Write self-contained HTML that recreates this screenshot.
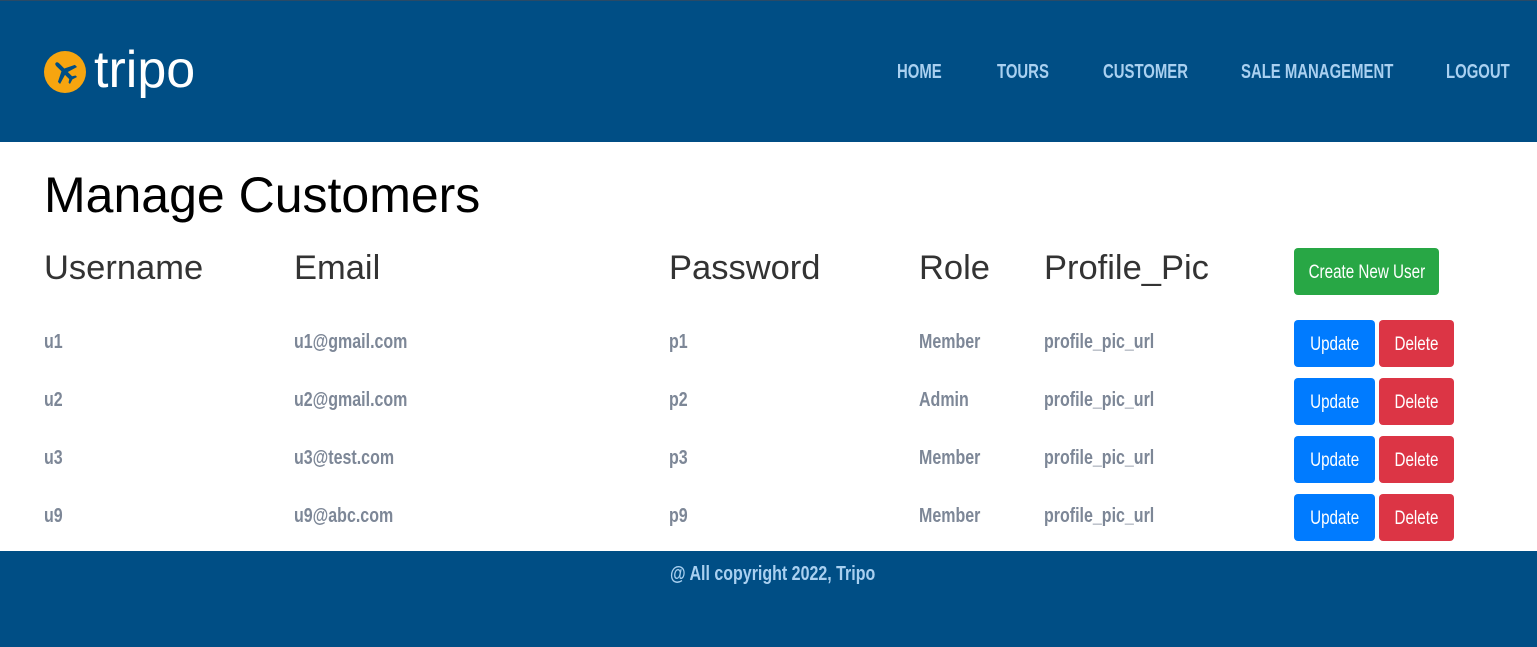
<!DOCTYPE html>
<html><head><meta charset="utf-8"><style>
*{margin:0;padding:0;box-sizing:border-box}
body{width:1537px;height:647px;position:relative;background:#fff;font-family:"Liberation Sans",sans-serif;overflow:hidden}
.hdr{position:absolute;left:0;top:0;width:1537px;height:142px;background:#004e85;border-top:1px solid #2a4a66}
.ftr{position:absolute;left:0;top:551px;width:1537px;height:96px;background:#004e85}
.c{position:absolute;white-space:nowrap;transform:scaleX(.8);transform-origin:left center;font-weight:bold}
.nav{color:#a9d0f0;font-size:20px;top:61px;transform:scaleX(.745)}
.h{position:absolute;font-size:34.5px;color:#333;top:249px}
.cell{color:#7d8797;font-size:20px}
.btn{position:absolute;border-radius:4px;color:#fff;font-size:19px;display:flex;align-items:center;justify-content:center;padding-top:3px;white-space:nowrap}
.btn span{display:inline-block;transform:scaleX(.8);white-space:nowrap}
.up{background:#007bff;width:81px;height:47px;left:1294px}
.del{background:#dc3545;width:75px;height:47px;left:1379px}
</style></head><body>
<div class="hdr"></div>
<svg style="position:absolute;left:44px;top:51px" width="42" height="42" viewBox="0 0 42 42"><circle cx="21" cy="21" r="21" fill="#f7a50f"/><g transform="rotate(-45 21 21)" fill="#004e85"><path d="M21 8c1.5 0 2 1.5 2 3v7l10 5v3l-10-3v6l3 2v2l-5-1.5-5 1.5v-2l3-2v-6l-10 3v-3l10-5v-7c0-1.5.5-3 2-3z"/></g></svg>
<div style="position:absolute;left:94px;top:40px;font-size:52px;color:#fff;line-height:60px">tripo</div>
<div class="c nav" style="left:897px">HOME</div>
<div class="c nav" style="left:997px">TOURS</div>
<div class="c nav" style="left:1103px">CUSTOMER</div>
<div class="c nav" style="left:1241px">SALE MANAGEMENT</div>
<div class="c nav" style="left:1446px">LOGOUT</div>
<div style="position:absolute;left:44px;top:166px;font-size:50px;color:#000">Manage Customers</div>
<div class="h" style="left:44px">Username</div>
<div class="h" style="left:294px">Email</div>
<div class="h" style="left:669px">Password</div>
<div class="h" style="left:919px">Role</div>
<div class="h" style="left:1044px">Profile_Pic</div>
<div class="btn" style="background:#28a745;left:1294px;top:248px;width:145px;height:47px"><span>Create New User</span></div>

<div class="c cell" style="left:44px;top:331px">u1</div><div class="c cell" style="left:294px;top:331px">u1@gmail.com</div><div class="c cell" style="left:669px;top:331px">p1</div><div class="c cell" style="left:919px;top:331px">Member</div><div class="c cell" style="left:1044px;top:331px">profile_pic_url</div>
<div class="btn up" style="top:320px"><span>Update</span></div><div class="btn del" style="top:320px"><span>Delete</span></div>

<div class="c cell" style="left:44px;top:389px">u2</div><div class="c cell" style="left:294px;top:389px">u2@gmail.com</div><div class="c cell" style="left:669px;top:389px">p2</div><div class="c cell" style="left:919px;top:389px">Admin</div><div class="c cell" style="left:1044px;top:389px">profile_pic_url</div>
<div class="btn up" style="top:378px"><span>Update</span></div><div class="btn del" style="top:378px"><span>Delete</span></div>

<div class="c cell" style="left:44px;top:447px">u3</div><div class="c cell" style="left:294px;top:447px">u3@test.com</div><div class="c cell" style="left:669px;top:447px">p3</div><div class="c cell" style="left:919px;top:447px">Member</div><div class="c cell" style="left:1044px;top:447px">profile_pic_url</div>
<div class="btn up" style="top:436px"><span>Update</span></div><div class="btn del" style="top:436px"><span>Delete</span></div>

<div class="c cell" style="left:44px;top:505px">u9</div><div class="c cell" style="left:294px;top:505px">u9@abc.com</div><div class="c cell" style="left:669px;top:505px">p9</div><div class="c cell" style="left:919px;top:505px">Member</div><div class="c cell" style="left:1044px;top:505px">profile_pic_url</div>
<div class="btn up" style="top:494px"><span>Update</span></div><div class="btn del" style="top:494px"><span>Delete</span></div>

<div class="ftr"></div>
<div class="c" style="left:670px;top:563px;color:#a9d0f0;font-size:20px">@ All copyright 2022, Tripo</div>
</body></html>
